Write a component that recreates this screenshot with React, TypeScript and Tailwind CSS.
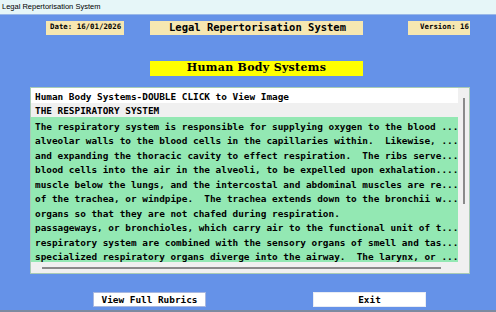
import React from "react";

const LINES = [
  "The respiratory system is responsible for supplying oxygen to the blood ...",
  "alveolar walls to the blood cells in the capillaries within.  Likewise, ...",
  "and expanding the thoracic cavity to effect respiration.  The ribs serve...",
  "blood cells into the air in the alveoli, to be expelled upon exhalation....",
  "muscle below the lungs, and the intercostal and abdominal muscles are re...",
  "of the trachea, or windpipe.  The trachea extends down to the bronchii w...",
  "organs so that they are not chafed during respiration.",
  "passageways, or bronchioles, which carry air to the functional unit of t...",
  "respiratory system are combined with the sensory organs of smell and tas...",
  "specialized respiratory organs diverge into the airway.  The larynx, or ...",
];

const mono = "font-['DejaVu_Sans_Mono',monospace] font-bold";

export default function App() {
  return (
    <div className="w-[496px] h-[312px] flex flex-col overflow-hidden bg-[#6592e8]">
      {/* window title */}
      <div className="h-[15px] bg-[#e6f6f8] border-b border-[#9ab8e8] pl-[2px] flex items-center font-['Liberation_Sans',sans-serif] text-[7.5px] text-black">
        Legal Repertorisation System
      </div>

      <div className="flex-1 flex flex-col border-b-2 border-[#7d8aa0]">
        {/* header boxes */}
        <div className={`flex mt-[6px] pl-[46px] ${mono} text-black`}>
          <div className="w-[78px] h-[14px] bg-[#f6e7b1] pl-[4px] pt-[1px] text-[7.4px] leading-[9px]">
            Date: 16/01/2026
          </div>
          <div className="ml-[26px] w-[213px] h-[14px] bg-[#f6e7b1] pl-[19px] flex items-center text-[10.5px]">
            Legal Repertorisation System
          </div>
          <div className="ml-[45px] w-[62px] h-[14px] bg-[#f6e7b1] pr-[1px] pt-[1px] text-right text-[7.4px] leading-[9px]">
            Version: 16
          </div>
        </div>

        {/* section title */}
        <div className="ml-[150px] mt-[26px] w-[213px] h-[15px] bg-[#ffff00] flex items-center justify-center font-['DejaVu_Serif',serif] font-black text-[11px] tracking-[0.3px] text-black">
          Human Body Systems
        </div>

        {/* list box */}
        <div className="ml-[30px] mt-[11px] w-[440px] h-[187px] border border-[#a9cbb4] bg-[#f0f0f0] flex flex-col">
          <div className="flex flex-1 min-h-0">
            <div className={`flex-1 flex flex-col ${mono} text-[9.4px] leading-[14.5px] text-black`}>
              <div className="h-[14.5px] bg-white pl-[4px] pt-[1.5px] leading-[13px] whitespace-pre">
                Human Body Systems-DOUBLE CLICK to View Image
              </div>
              <div className="h-[14.5px] bg-[#f0f0f0] pl-[4px] pt-[1.5px] leading-[13px] whitespace-pre">
                THE RESPIRATORY SYSTEM
              </div>
              <div className="flex-1 bg-[#93e8b3] pl-[4px] pt-[2.5px]">
                {LINES.map((l, i) => (
                  <div key={i} className="h-[14.5px] whitespace-pre">
                    {l}
                  </div>
                ))}
              </div>
            </div>
            {/* vertical scrollbar */}
            <div className="w-[11px] bg-[#f0f0f0] flex justify-center pt-[10px]">
              <div className="w-[2px] h-[106px] bg-[#8a8a8a]" />
            </div>
          </div>
          {/* horizontal scrollbar */}
          <div className="h-[11px] bg-[#f0f0f0] flex items-center pl-[11px]">
            <div className="w-[399px] h-[2px] bg-[#8a8a8a]" />
          </div>
        </div>

        {/* buttons */}
        <div className={`flex mt-[18px] pl-[93px] ${mono} text-[9.4px] text-black`}>
          <button className="w-[113px] h-[15px] bg-white border border-[#a8b8e0] flex items-center justify-center leading-none">
            View Full Rubrics
          </button>
          <button className="ml-[107px] w-[113px] h-[15px] bg-white border border-[#e8ecf4] flex items-center justify-center leading-none">
            Exit
          </button>
        </div>
      </div>
    </div>
  );
}
